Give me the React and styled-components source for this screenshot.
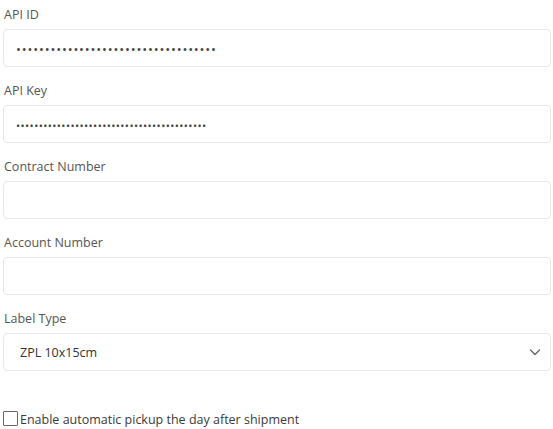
import React from 'react';
import styled, { createGlobalStyle } from 'styled-components';

const GlobalStyle = createGlobalStyle`
  body {
    margin: 0;
    background: #ffffff;
    font-family: "Open Sans", "Liberation Sans", sans-serif;
  }
`;

const fields = [
  { label: 'API ID', value: '•'.repeat(35), secret: true },
  { label: 'API Key', value: '•'.repeat(42), secret: true, small: true },
  { label: 'Contract Number', value: '' },
  { label: 'Account Number', value: '' },
];

export default function App() {
  return (
    <>
      <GlobalStyle />
      <Form>
        {fields.map((f) => (
          <Field key={f.label}>
            <Label>{f.label}</Label>
            <Input>
              {f.secret && <Dots small={f.small}>{f.value}</Dots>}
            </Input>
          </Field>
        ))}
        <Field>
          <Label>Label Type</Label>
          <Select>
            <SelectValue>ZPL 10x15cm</SelectValue>
            <svg width="14" height="14" viewBox="0 0 14 14" fill="none">
              <path d="M2.5 5 L7 9.5 L11.5 5" stroke="#666" strokeWidth="1.3" strokeLinecap="round" strokeLinejoin="round" />
            </svg>
          </Select>
        </Field>
        <CheckRow>
          <Box />
          <CheckText>Enable automatic pickup the day after shipment</CheckText>
        </CheckRow>
      </Form>
    </>
  );
}

const Form = styled.div`
  display: flex;
  flex-direction: column;
  width: 548px;
  padding: 5px 2px 0 3px;
`;

const Field = styled.div`
  display: flex;
  flex-direction: column;
  gap: 4px;
  margin-bottom: 14px;
`;

const Label = styled.div`
  font-size: 12.5px;
  line-height: 20px;
  color: #555;
  padding-left: 1px;
`;

const Input = styled.div`
  box-sizing: border-box;
  height: 38px;
  border: 1px solid #e8e8e8;
  border-radius: 4px;
  display: flex;
  align-items: center;
  padding: 0 12px;
`;

const Dots = styled.span`
  font-size: ${(p) => (p.small ? '11px' : '13px')};
  letter-spacing: ${(p) => (p.small ? '0.4px' : '0.85px')};
  color: #444;
  padding-top: 2px;
`;

const Select = styled(Input)`
  justify-content: space-between;
  padding: 0 8px 0 16px;
`;

const SelectValue = styled.span`
  font-size: 12.5px;
  color: #333;
`;

const CheckRow = styled.label`
  display: flex;
  align-items: center;
  margin-top: 23px;
`;

const Box = styled.span`
  box-sizing: border-box;
  width: 15px;
  height: 15px;
  border: 1px solid #666;
  border-radius: 1px;
  margin-right: 2px;
`;

const CheckText = styled.span`
  font-size: 12.5px;
  color: #3a3a3a;
  padding-top: 3px;
`;
